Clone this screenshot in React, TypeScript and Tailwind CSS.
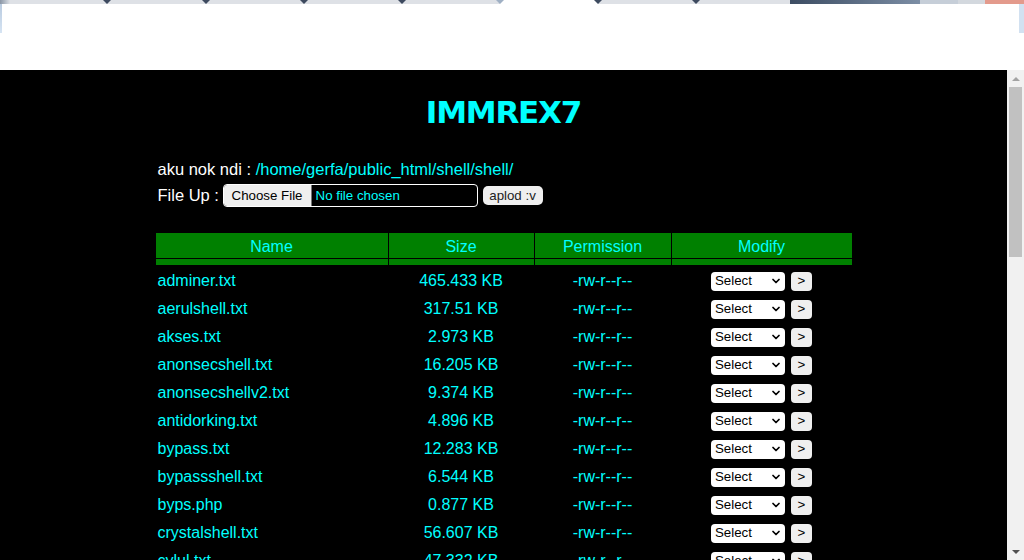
import { ChevronDown } from "lucide-react";

const files = [
  { name: "adminer.txt", size: "465.433 KB" },
  { name: "aerulshell.txt", size: "317.51 KB" },
  { name: "akses.txt", size: "2.973 KB" },
  { name: "anonsecshell.txt", size: "16.205 KB" },
  { name: "anonsecshellv2.txt", size: "9.374 KB" },
  { name: "antidorking.txt", size: "4.896 KB" },
  { name: "bypass.txt", size: "12.283 KB" },
  { name: "bypassshell.txt", size: "6.544 KB" },
  { name: "byps.php", size: "0.877 KB" },
  { name: "crystalshell.txt", size: "56.607 KB" },
  { name: "cylul.txt", size: "47.332 KB" },
];

const tabMarks = [107, 206, 304, 402, 598, 696];

const TopChrome = () => (
  <>
    {/* Tab strip */}
    <div className="relative flex h-[4px] shrink-0">
      <div className="w-[10px] bg-gradient-to-r from-[#8a96a6] to-[#dee1e6]" />
      <div className="w-[490px] bg-[#dee1e6]" />
      <div className="w-[98px] bg-white" />
      <div className="w-[192px] bg-[#dee1e6]" />
      <div className="w-[130px] bg-gradient-to-r from-[#3d4d63] to-[#7c8ea5]" />
      <div className="w-[38px] bg-[#c6ced8]" />
      <div className="w-[27px] bg-[#d3d8de]" />
      <div className="flex-1 bg-[#e39a8c]" />
      {tabMarks.map((x) => (
        <div
          key={x}
          style={{ left: x - 4 }}
          className="absolute top-0 h-0 w-0 border-x-[4px] border-t-[4px] border-x-transparent border-t-[#3d4a5f]"
        />
      ))}
      <div className="absolute left-[496px] top-0 h-0 w-0 border-x-[4px] border-t-[4px] border-x-transparent border-t-[#9fb0c4]" />
    </div>
    {/* Blank toolbar area */}
    <div className="flex h-[66px] shrink-0 bg-white">
      <div className="h-[29px] w-[2px] bg-gradient-to-b from-[#b9cbe0] to-[#d6e4f3]" />
      <div className="flex-1" />
      <div className="h-[29px] w-[5px] bg-[#d2e1f1]" />
    </div>
  </>
);

const Scrollbar = () => (
  <div className="flex w-[17px] shrink-0 flex-col items-center bg-[#f1f1f1]">
    <div className="flex h-[17px] w-full items-center justify-center">
      <div className="h-0 w-0 border-x-[4px] border-b-[4px] border-x-transparent border-b-[#a3a3a3]" />
    </div>
    <div className="h-[170px] w-[13px] bg-[#c1c1c1]" />
    <div className="flex-1" />
    <div className="flex h-[17px] w-full items-center justify-center">
      <div className="h-0 w-0 border-x-[4px] border-t-[4px] border-x-transparent border-t-[#505050]" />
    </div>
  </div>
);

const FileRow = ({ name, size }: { name: string; size: string }) => (
  <div className="flex h-[28px] shrink-0 items-center gap-[1px] text-[16px] text-[#00ffff]">
    <div className="w-[232px] pl-[2px]">{name}</div>
    <div className="w-[145px] text-center">{size}</div>
    <div className="w-[136px] text-center">-rw-r--r--</div>
    <div className="flex w-[180px] items-center justify-center gap-[6px]">
      <div className="flex h-[19px] w-[74px] items-center justify-between rounded-[4px] bg-white pl-[4px] pr-[3px] text-[13.3px] text-black">
        <span>Select</span>
        <ChevronDown size={12} strokeWidth={3.5} />
      </div>
      <div className="flex h-[19px] w-[21px] items-center justify-center rounded-[4px] bg-[#efefef] text-[13.3px] text-black">
        &gt;
      </div>
    </div>
  </div>
);

const App = () => {
  return (
    <div className="flex h-[560px] w-[1024px] flex-col overflow-hidden bg-white font-['Liberation_Sans',Arial,sans-serif]">
      <TopChrome />

      <div className="flex min-h-0 flex-1">
        <main className="flex min-w-0 flex-1 flex-col overflow-hidden bg-black">
          {/* Title */}
          <h1 className="mt-[22px] flex h-[40px] shrink-0 items-center justify-center font-['DejaVu_Sans',Verdana,sans-serif] text-[31px] font-bold tracking-[-1.2px] text-[#00ffff]">
            IMMREX7
          </h1>

          <div className="mx-auto mt-[27px] flex w-[696px] flex-col">
            {/* Current dir */}
            <div className="flex h-[20px] items-center pl-[2px] text-[16.5px] text-white">
              <span>aku nok ndi :&nbsp;</span>
              <span className="text-[#00ffff]">/home/gerfa/public_html/shell/shell/</span>
            </div>

            {/* Upload */}
            <div className="mt-[4px] flex h-[25px] items-center pl-[2px] text-[16.5px] text-white">
              <span>File Up :&nbsp;</span>
              <div className="-ml-px flex h-[23px] w-[255px] items-center overflow-hidden rounded-[4px] border border-white text-[13.3px]">
                <div className="flex h-full w-[88px] items-center justify-center border-r border-[#767676] bg-[#efefef] text-black">
                  Choose File
                </div>
                <span className="pl-[4px] text-[#00ffff]">No file chosen</span>
              </div>
              <div className="ml-[5px] flex h-[19px] w-[60px] items-center justify-center rounded-[5px] bg-[#efefef] text-[13.3px] text-[#222]">
                aplod :v
              </div>
            </div>

            {/* Table */}
            <div className="mt-[25px] flex flex-col">
              <div className="flex h-[25px] gap-[1px] text-[16px] text-[#00ffff]">
                <div className="flex w-[232px] items-center justify-center bg-[#008000] pt-[2px]">Name</div>
                <div className="flex w-[145px] items-center justify-center bg-[#008000] pt-[2px]">Size</div>
                <div className="flex w-[136px] items-center justify-center bg-[#008000] pt-[2px]">Permission</div>
                <div className="flex w-[180px] items-center justify-center bg-[#008000] pt-[2px]">Modify</div>
              </div>
              <div className="mt-[1px] flex h-[6px] gap-[1px]">
                <div className="w-[232px] bg-[#008000]" />
                <div className="w-[145px] bg-[#008000]" />
                <div className="w-[136px] bg-[#008000]" />
                <div className="w-[180px] bg-[#008000]" />
              </div>
              <div className="mt-[2px] flex flex-col">
                {files.map((f) => (
                  <FileRow key={f.name} name={f.name} size={f.size} />
                ))}
              </div>
            </div>
          </div>
        </main>

        <Scrollbar />
      </div>
    </div>
  );
};

export default App;
